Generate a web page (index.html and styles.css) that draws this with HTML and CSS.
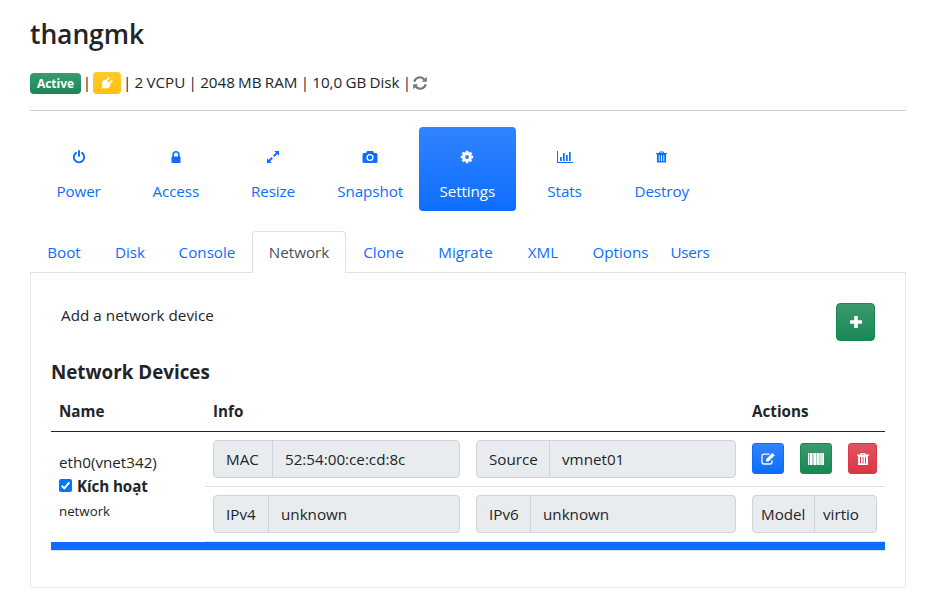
FILE: index.html
```html
<!DOCTYPE html>
<html lang="en">
<head>
<meta charset="utf-8">
<title>thangmk</title>
<link rel="stylesheet" href="styles.css">
</head>
<body>
<svg class="defs" width="0" height="0">
  <symbol id="trash" viewBox="0 0 12 12"><path fill-rule="evenodd" d="M4 0h4l1 1.600h3v1.100h-1V12H1V2.700H0V1.600h3zM4.600 1l-.4.6h3.600L7.400 1zM3 4v6.500h1V4zM5.500 4v6.500h1V4zM8 4v6.500h1V4z"/></symbol>
</svg>
<header class="head">
  <h3>thangmk</h3>
  <div class="summary">
    <span class="badge green">Active</span><span class="bar">|</span>
    <span class="badge yellow"><svg width="14" height="14" viewBox="0 0 14 14"><path fill="#fff" d="M4.400 3.500l.9.900L8.200 1.400q.8-.6 1.300 0 .4.700-.2 1.300L7 5.200l1.600 1.600L11.200 4.300q.7-.5 1.300 0 .5.700-.1 1.300L9.600 8.400l1 1q-1.500 2.700-4.200 3-1.600.1-2.700-.6L1.500 13 1 12.500l1.300-2.100Q1.500 8.500 2.200 6.500 2.900 4.500 4.400 3.500z"/></svg></span>
    <span class="specs">| 2 VCPU | 2048 MB RAM | 10,0 GB Disk |</span>
    <svg class="refresh" width="14" height="14" viewBox="0 0 14 14"><g fill="none" stroke="#6c757d" stroke-width="2"><path d="M1.300 5.700C2.200.9 8.300-.1 11.300 3.500M12.700 8.300C11.800 13.100 5.700 14.100 2.700 10.500"/></g><path fill="#6c757d" d="M13.800.700v5H8.800zM.2 13.300v-5h5z"/></svg>
  </div>
</header>

<nav class="pills">
  <a><svg width="14" height="14" viewBox="0 0 14 14"><g fill="none" stroke="currentColor" stroke-width="1.900" stroke-linecap="round"><path d="M4 2.900a5.200 5.200 0 1 0 6 0M7 1v5"/></g></svg><span>Power</span></a>
  <a><svg width="14" height="14" viewBox="0 0 14 14"><path fill="currentColor" d="M2.500 6.500h9V13h-9z"/><path fill="none" stroke="currentColor" stroke-width="1.600" d="M4.200 7V4.500a2.800 2.800 0 0 1 5.600 0V7"/></svg><span>Access</span></a>
  <a><svg width="14" height="14" viewBox="0 0 14 14"><path fill="currentColor" d="M8.300 1H13v4.700l-1.600-1.600-2.900 2.900L7.100 5.600 10 2.700zM5.700 13H1V8.300l1.600 1.600 2.900-2.900L6.900 8.400 4 11.300z"/></svg><span>Resize</span></a>
  <a><svg width="16" height="14" viewBox="0 0 16 14"><path fill="currentColor" d="M5 1h6l1 2h2q1.500 0 1.500 1.500v7Q15.500 13 14 13H2Q.5 13 .5 11.500v-7Q.5 3 2 3h2z"/><circle cx="8" cy="7.500" r="2.900" fill="none" stroke="#fff" stroke-width="1.300"/></svg><span>Snapshot</span></a>
  <a class="active"><svg width="14" height="14" viewBox="0 0 14 14"><circle cx="7" cy="7" r="3.400" fill="none" stroke="currentColor" stroke-width="3"/><path stroke="currentColor" stroke-width="2.700" d="M7 .8v2M7 11.200v2M.8 7h2M11.200 7h2M2.600 2.600l1.500 1.500M9.900 9.900l1.500 1.500M2.600 11.400l1.500-1.500M9.900 4.100l1.500-1.500"/></svg><span>Settings</span></a>
  <a><svg width="16" height="14" viewBox="0 0 16 14"><path fill="currentColor" d="M0 1h1v11h15v1H0zM3 7h1.700v4H3zM6 3h1.700v8H6zM9 5h1.700v6H9zM12 2h1.700v9H12z"/></svg><span>Stats</span></a>
  <a><svg width="11" height="12"><use href="#trash" fill="currentColor"/></svg><span>Destroy</span></a>
</nav>

<nav class="tabs">
  <a class="boot">Boot</a><a class="disk">Disk</a><a class="console">Console</a><a class="network active">Network</a><a class="clone">Clone</a><a class="migrate">Migrate</a><a class="xml">XML</a><a class="options">Options</a><a class="users">Users</a>
</nav>

<main class="panel">
  <div class="add">
    <span>Add a network device</span>
    <button class="btn green plus"><svg width="14" height="14" viewBox="0 0 14 14"><path fill="#fff" d="M5.200 1h3.600v4.200H13v3.600H8.800V13H5.200V8.800H1V5.200h4.200z"/></svg></button>
  </div>
  <h5>Network Devices</h5>
  <div class="table">
    <div class="row thead"><b>Name</b><b>Info</b><b></b><b>Actions</b></div>
    <div class="device">
      <div class="name">
        <span>eth0(vnet342)</span>
        <label><i class="check"><svg width="13" height="13" viewBox="0 0 13 13"><path fill="none" stroke="#fff" stroke-width="2" d="M2.700 6.700l2.600 2.600 5-5.900"/></svg></i><b>Kích hoạt</b></label>
        <small>network</small>
      </div>
      <div class="details">
        <div class="line">
          <div class="group"><span class="mac">MAC</span><span>52:54:00:ce:cd:8c</span></div>
          <div class="group"><span class="source">Source</span><span>vmnet01</span></div>
          <div class="actions">
            <button class="btn blue"><svg width="14" height="14" viewBox="0 0 14 14"><path fill="none" stroke="#fff" stroke-width="1.300" d="M8.500 2.200H3Q1 2.200 1 4.200v6Q1 12 3 12h6q2 0 2-2V8.300"/><path fill="#fff" d="M11.400.9l2.400 2.400-6.300 6.300H5V7.200z"/></svg></button>
            <button class="btn green"><svg width="16" height="12" viewBox="0 0 16 12"><path fill="#fff" opacity=".45" d="M0 0h16v12H0z"/><path fill="#fff" d="M0 0h1v12H0zM2 0h2v12H2zM4.700 0h.7v12h-.7zM6 0h2v12H6zM8.800 0h2v12h-2zM11.500 0h1v12h-1zM13 0h.7v12H13zM14.300 0H16v12h-1.700z"/></svg></button>
            <button class="btn red"><svg width="12" height="12"><use href="#trash" fill="#fff"/></svg></button>
          </div>
        </div>
        <div class="line">
          <div class="group"><span class="ip">IPv4</span><span>unknown</span></div>
          <div class="group"><span class="ip">IPv6</span><span>unknown</span></div>
          <div class="group small"><span class="model">Model</span><span>virtio</span></div>
        </div>
      </div>
    </div>
    <div class="divider"></div>
  </div>
</main>
</body>
</html>
```

FILE: styles.css
```css
* { box-sizing: border-box; }
body { margin: 0; padding: 0 23px 0 30px; background: #fff; color: #212529; font: 15.2px/24px "Open Sans", "Noto Sans", sans-serif; }
svg { display: block; flex: none; }
.defs { position: absolute; }
b { font-weight: 700; }
.head { height: 111px; padding-top: 17px; border-bottom: 1px solid #c8c9ca; }
h3 { margin: 0; font-size: 26.500px; line-height: 34px; font-weight: 600; letter-spacing: -.1px; }
.summary { display: flex; align-items: center; height: 24px; margin-top: 20px; white-space: nowrap; }
.badge { display: flex; align-items: center; justify-content: center; height: 21px; border-radius: 4px; color: #fff; font-size: 12px; font-weight: 700; }
.badge.green { width: 51px; padding-top: 1px; }
.badge.yellow { width: 28px; height: 22px; margin-right: 2px; background: linear-gradient(#ffca2c, #ffc107); }
.bar { width: 12px; text-align: center; }
.bar, .specs { position: relative; top: -1px; }
.specs { width: 290px; word-spacing: -.65px; letter-spacing: -.02px; }
.refresh { margin-top: -1px; }
.green { background: linear-gradient(#3c9a6e, #198754); }
.blue { background: linear-gradient(#3183ff, #0d6efd); }
.red { background: linear-gradient(#e15361, #dc3545); }

.pills { display: flex; margin-top: 16px; }
.pills a { display: flex; flex-direction: column; align-items: center; width: 97.200px; height: 84px; padding-top: 23px; border-radius: 4px; color: #0d6efd; }
.pills svg { height: 14px; }
.pills span { margin-top: 15px; letter-spacing: -.1px; }
.pills .active { color: #fff; background: linear-gradient(#3183ff, #0d6efd); }

.tabs { display: flex; width: 876px; height: 42px; margin-top: 20px; border-bottom: 1px solid #dee2e6; }
.tabs a { height: 42px; line-height: 43px; text-align: center; color: #0d6efd; }
.tabs .active { line-height: 41px; color: #495057; background: #fff; border: 1px solid #dee2e6; border-bottom: 0; border-radius: 4px 4px 0 0; }
.boot { width: 68px; }
.disk { width: 64px; }
.console { width: 90px; }
.network { width: 94px; }
.clone { width: 75px; }
.migrate { width: 89px; }
.xml { width: 66px; }
.options { width: 89px; }
.users { width: 50px; letter-spacing: -.3px; }

.panel { width: 876px; height: 315px; padding: 30px 20px 0; border: 1px solid #ececec; border-top: 0; }
.add { display: flex; justify-content: space-between; height: 38px; padding: 0 10px; letter-spacing: .05px; }
.btn { display: flex; align-items: center; justify-content: center; width: 32px; height: 31px; padding: 0; border: 1px solid #0d6efd; border-radius: 3px; }
.btn.green { border-color: #198754; }
.btn.red { width: 29px; border-color: #dc3545; }
.btn.plus { width: 39px; height: 38px; border-radius: 4px; }
h5 { margin: 19px 0 0; font-size: 18.800px; line-height: 24px; font-weight: 700; }
.table { margin-top: 7px; }
.row { display: grid; grid-template-columns: 154px 263px 276px 141px; height: 41px; padding-top: 8px; border-bottom: 1px solid #212529; }
.row b { padding-left: 8px; }
.device { display: flex; }
.name { display: flex; flex-direction: column; width: 154px; padding: 18px 8px 0; }
.name label { display: flex; align-items: center; height: 24px; letter-spacing: -.1px; }
.name small { margin-top: 1px; font-size: 13.300px; }
.check { width: 13px; height: 13px; margin: -1px 5px 0 0; border-radius: 2px; background: #0075ff; }
.details { width: 680px; }
.line { display: flex; gap: 16px; height: 55px; padding: 8px; border-bottom: 1px solid #dee2e6; }
.group { display: flex; width: 247px; height: 38px; border: 1px solid #ced4da; border-radius: 4px; background: #e9ecef; line-height: 37px; }
.group + .group { width: 260px; }
.group span { padding-left: 12px; }
.group span:first-child { border-right: 1px solid #ced4da; }
.mac { width: 59px; }
.source { width: 73px; }
.ip { width: 55px; }
.group + .group .ip { width: 54px; }
.group + .group.small { width: 125px; }
.group.small span { padding-left: 8px; }
.model { width: 62px; }
.actions { display: flex; gap: 16px; padding-top: 3px; }
.divider { height: 9px; background: #0d6efd; border-bottom: 1px solid #dee2e6; }
```
